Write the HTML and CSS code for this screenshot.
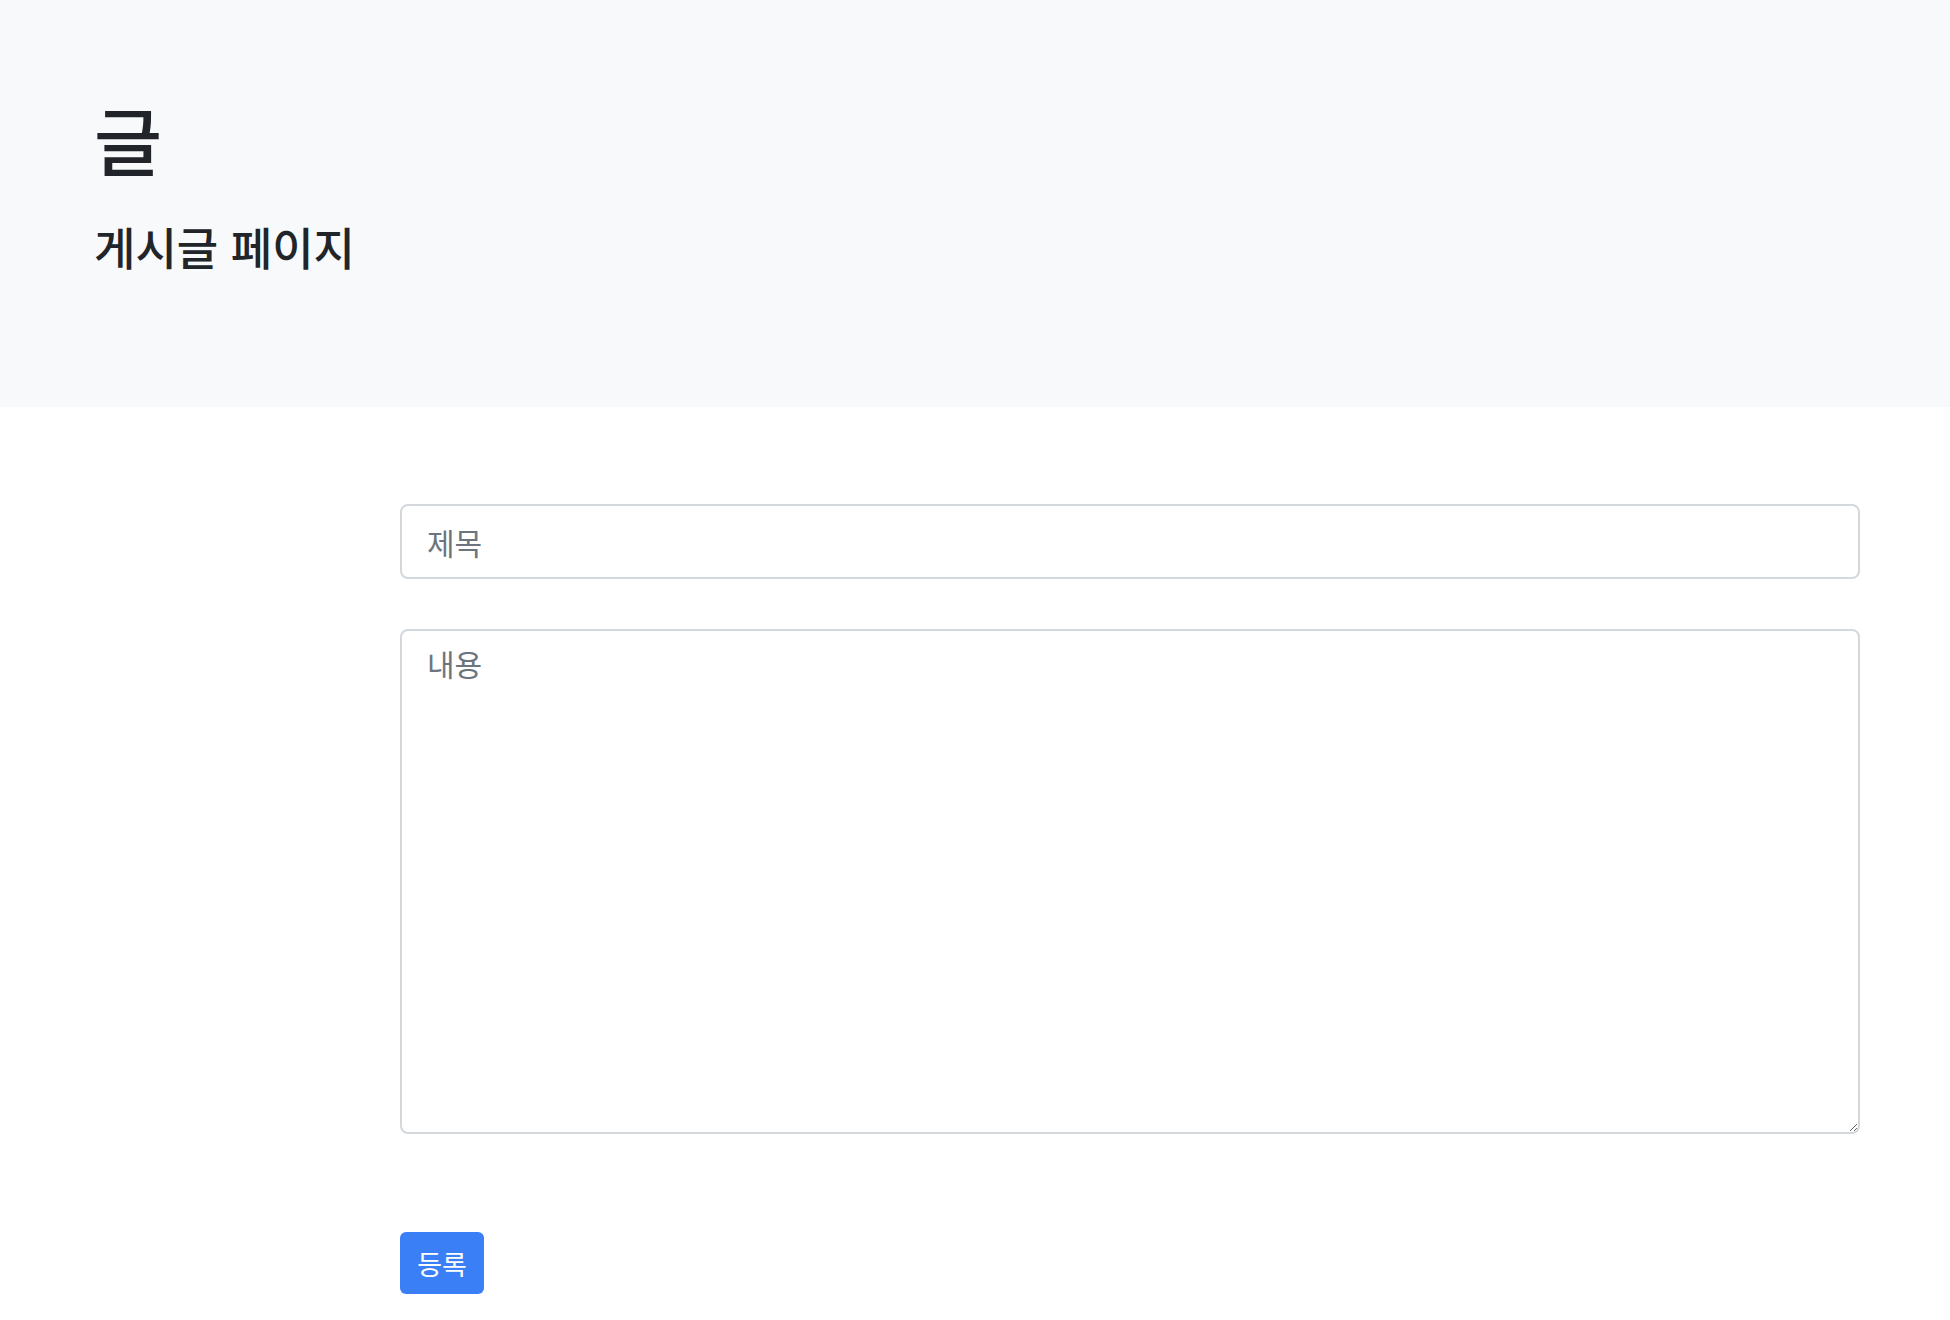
FILE: index.html
```html
<!DOCTYPE html>
<html lang="ko">
<head>
<meta charset="utf-8">
<title>글</title>
<link rel="stylesheet" href="styles.css">
</head>
<body>
<header class="hero">
  <h1 class="hero-title">글</h1>
  <p class="hero-lead">게시글 페이지</p>
</header>
<main class="content">
  <form class="post-form">
    <input class="field field-title" type="text" placeholder="제목">
    <textarea class="field field-body" placeholder="내용"></textarea>
    <div class="actions">
      <button class="btn-submit" type="button">등록</button>
    </div>
  </form>
</main>
</body>
</html>
```

FILE: styles.css
```css
* { box-sizing: border-box; }
html, body {
  margin: 0;
  padding: 0;
  background: #fff;
  color: #212529;
  font-family: "Noto Sans CJK KR", "Noto Sans", sans-serif;
}
.hero {
  background: #f8f9fa;
  height: 407px;
  padding: 94px 0 0 94px;
}
.hero-title {
  margin: 0;
  font-size: 74px;
  font-weight: 500;
  line-height: 1.2;
}
.hero-lead {
  margin: 37px 0 0 0;
  font-size: 45px;
  font-weight: 500;
  line-height: 1.2;
}
.content {
  padding: 97px 90px 0 400px;
}
.post-form {
  display: flex;
  flex-direction: column;
}
.field {
  display: block;
  width: 100%;
  border: 2px solid #d3d8dd;
  border-radius: 8px;
  background: #fff;
  color: #495057;
  font-family: inherit;
  font-size: 30px;
  padding: 0 25px;
  outline: none;
}
.field::placeholder { color: #6c757d; }
.field-title {
  height: 75px;
}
.field-body {
  margin-top: 50px;
  height: 505px;
  padding-top: 10px;
  resize: vertical;
  line-height: 1.5;
}
.actions {
  margin-top: 98px;
}
.btn-submit {
  width: 84px;
  height: 62px;
  border: none;
  border-radius: 6px;
  background: #3a7ff6;
  color: #fff;
  font-family: inherit;
  font-size: 27px;
  padding: 0;
  cursor: pointer;
}
```
